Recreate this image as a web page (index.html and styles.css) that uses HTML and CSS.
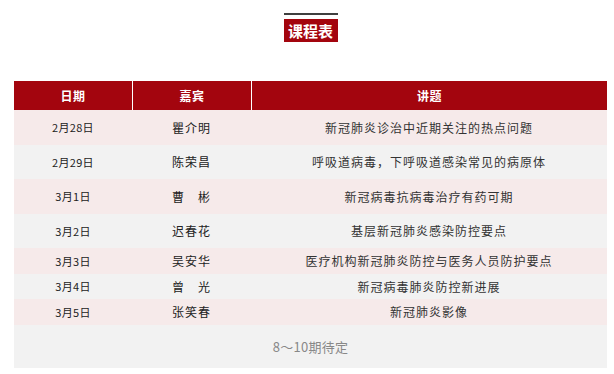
FILE: index.html
```html
<!DOCTYPE html>
<html lang="zh-CN">
<head>
<meta charset="utf-8">
<title>课程表</title>
<link rel="stylesheet" href="styles.css">
</head>
<body>
<div class="page">
  <div class="title-wrap">
    <div class="title-rule"></div>
    <div class="title">课程表</div>
  </div>
  <table class="schedule">
    <colgroup>
      <col class="c-date">
      <col class="c-name">
      <col class="c-topic">
    </colgroup>
    <thead>
      <tr>
        <th>日期</th>
        <th class="sep">嘉宾</th>
        <th class="sep">讲题</th>
      </tr>
    </thead>
    <tbody>
      <tr class="pink tall"><td class="date">2月28日</td><td class="name">瞿介明</td><td class="topic">新冠肺炎诊治中近期关注的热点问题</td></tr>
      <tr class="gray tall"><td class="date">2月29日</td><td class="name">陈荣昌</td><td class="topic">呼吸道病毒，下呼吸道感染常见的病原体</td></tr>
      <tr class="pink tall"><td class="date">3月1日</td><td class="name">曹　彬</td><td class="topic">新冠病毒抗病毒治疗有药可期</td></tr>
      <tr class="gray tall"><td class="date">3月2日</td><td class="name">迟春花</td><td class="topic">基层新冠肺炎感染防控要点</td></tr>
      <tr class="pink short"><td class="date">3月3日</td><td class="name">吴安华</td><td class="topic">医疗机构新冠肺炎防控与医务人员防护要点</td></tr>
      <tr class="gray short"><td class="date">3月4日</td><td class="name">曾　光</td><td class="topic">新冠病毒肺炎防控新进展</td></tr>
      <tr class="pink short"><td class="date">3月5日</td><td class="name">张笑春</td><td class="topic">新冠肺炎影像</td></tr>
      <tr class="gray last"><td class="pending" colspan="3">8～10期待定</td></tr>
    </tbody>
  </table>
</div>
</body>
</html>
```

FILE: styles.css
```css
html, body {
  margin: 0;
  padding: 0;
  background: #ffffff;
}

body {
  font-family: "Noto Sans CJK SC", "Noto Sans", "Liberation Sans", sans-serif;
  color: #333333;
}

.page {
  width: 593px;
  margin-left: 14px;
  padding-top: 13px;
}

.title-wrap {
  display: flex;
  flex-direction: column;
  align-items: center;
  gap: 4px;
}

.title-rule {
  width: 54px;
  height: 2px;
  background: #3f3f3f;
}

.title {
  width: 54px;
  height: 23px;
  line-height: 23px;
  background: #a3050e;
  color: #ffffff;
  font-size: 15px;
  font-weight: bold;
  text-align: center;
  letter-spacing: 0;
}

.schedule {
  margin-top: 39px;
  width: 593px;
  table-layout: fixed;
  border-collapse: separate;
  border-spacing: 0;
}

.c-date { width: 118px; }
.c-name { width: 119px; }
.c-topic { width: 356px; }

.schedule th {
  height: 29px;
  padding: 0;
  background: #a3050e;
  color: #ffffff;
  font-size: 12px;
  font-weight: bold;
  letter-spacing: 0.5px;
  text-align: center;
}

.schedule th.sep {
  border-left: 1px solid #ffffff;
}

.schedule td {
  padding: 0;
  text-align: center;
  vertical-align: middle;
}

.pink { background: #f6eaea; }
.gray { background: #f2f2f2; }

.tall td { height: 34.5px; }
.short td { height: 25.5px; }
.last td { height: 43.5px; }

.date {
  font-size: 11px;
  letter-spacing: 0.3px;
  color: #222222;
}

.name {
  font-size: 12px;
  letter-spacing: 1px;
  color: #222222;
}

.topic {
  font-size: 12px;
  letter-spacing: 1px;
  color: #333333;
}

.pending {
  font-size: 13px;
  color: #888888;
  letter-spacing: 0.3px;
}
```
